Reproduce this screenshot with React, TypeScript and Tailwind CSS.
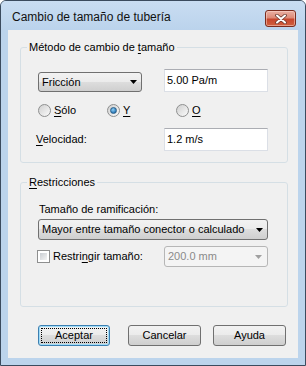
import React from "react";

const face =
  "bg-[linear-gradient(#f2f2f2_0%,#ebebeb_50%,#dddddd_50%,#cfcfcf_100%)]";

function Arrow({ color = "#000" }: { color?: string }) {
  return (
    <svg width="7" height="4" viewBox="0 0 7 4" className="shrink-0">
      <path d="M0 0H7L3.5 4Z" fill={color} />
    </svg>
  );
}

function Radio({ checked, children }: { checked?: boolean; children: React.ReactNode }) {
  return (
    <div className="flex items-center w-[69px] h-[13px]">
      <div className="w-[13px] h-[13px] rounded-full border border-[#8e8f8f] bg-[linear-gradient(135deg,#cfcfcf,#fbfbfb)] flex items-center justify-center shrink-0">
        {checked && (
          <div className="w-[7px] h-[7px] rounded-full border border-[#2c5f88] bg-[radial-gradient(circle_at_40%_35%,#8fd0f5,#2a78b8_70%,#1b4f7e)]" />
        )}
      </div>
      <span className="ml-[3px] leading-[13px]">{children}</span>
    </div>
  );
}

function TextBox({ value }: { value: string }) {
  return (
    <div className="w-[104px] h-[23px] bg-white border border-[#dbdfe6] border-t-[#abadb3] flex items-center pl-[2px] leading-[13px]">
      {value}
    </div>
  );
}

export default function App() {
  return (
    <div className="w-[306px] h-[366px] flex flex-col bg-[#bcd4ec] border border-[#3b4b5e] rounded-t-[6px] overflow-hidden font-['Liberation_Sans',Arial,sans-serif] text-[11px] text-black">
      {/* Title bar */}
      <div className="h-[29px] shrink-0 flex items-start justify-between pl-[11px] pr-[9px] bg-[linear-gradient(#c9ddf2,#bbd3ec)]">
        <div className="pt-[9px] text-[12px] leading-[15px] text-[#111]">
          Cambio de tamaño de tubería
        </div>
        <div className="mt-[9px] w-[31px] h-[17px] rounded-[3px] border border-[#7a2c1e] bg-[linear-gradient(#eab0a3_0%,#dd8a77_45%,#c7462d_55%,#d0603f_100%)] flex items-center justify-center shadow-[inset_0_0_0_1px_rgba(255,220,210,0.5)]">
          <svg width="12" height="10" viewBox="0 0 12 10">
            <path d="M2 1.5L10 8.5M10 1.5L2 8.5" stroke="#6b3a30" strokeWidth="3.6" strokeLinecap="round" />
            <path d="M2 1.5L10 8.5M10 1.5L2 8.5" stroke="#ffffff" strokeWidth="2" strokeLinecap="round" />
          </svg>
        </div>
      </div>

      {/* Client area */}
      <div className="flex-1 ml-[7px] mb-[7px] w-[290px] bg-[#f0f0f0] flex flex-col">
        {/* Group 1 */}
        <fieldset className="mt-[11px] ml-[12px] w-[268px] border border-[#d5dfe5] rounded-[3px] pl-[17px] pr-[19px] pb-[11px]">
          <legend className="-ml-[11px] px-[2px] leading-[13px]">
            Método de cambio de <span className="underline underline-offset-[2px]">t</span>amaño
          </legend>
          <div className="pt-[15px] flex items-end justify-between">
            <div className={`w-[104px] h-[20px] rounded-[3px] border border-[#707070] ${face} flex items-center justify-between pl-[3px] pr-[4px] leading-[13px]`}>
              <span>Fricción</span>
              <Arrow />
            </div>
            <TextBox value="5.00 Pa/m" />
          </div>
          <div className="mt-[12px] flex items-center">
            <Radio>
              <span className="underline underline-offset-[2px]">S</span>ólo
            </Radio>
            <Radio checked>
              <span className="underline underline-offset-[2px]">Y</span>
            </Radio>
            <Radio>
              <span className="underline underline-offset-[2px]">O</span>
            </Radio>
          </div>
          <div className="mt-[11px] flex items-center justify-between">
            <span className="-ml-[2px] leading-[13px]">
              <span className="underline underline-offset-[2px]">V</span>elocidad:
            </span>
            <TextBox value="1.2 m/s" />
          </div>
        </fieldset>

        {/* Group 2 */}
        <fieldset className="mt-[13px] ml-[12px] w-[268px] border border-[#d5dfe5] rounded-[3px] pl-[17px] pr-[19px] pb-[39px]">
          <legend className="-ml-[11px] px-[2px] leading-[13px]">
            <span className="underline underline-offset-[2px]">R</span>estricciones
          </legend>
          <div className="pt-[14px] pl-[1px] leading-[13px]">Tamaño de ramificación:</div>
          <div className={`mt-[3px] w-[230px] h-[21px] rounded-[3px] border border-[#707070] ${face} flex items-center justify-between pl-[3px] pr-[4px] leading-[13px]`}>
            <span>Mayor entre tamaño conector o calculado</span>
            <Arrow />
          </div>
          <div className="mt-[6px] flex items-center justify-between">
            <div className="flex items-center -ml-[1px]">
              <div className="w-[13px] h-[13px] border border-[#8e8f8f] bg-white p-[2px]">
                <div className="w-full h-full bg-[linear-gradient(135deg,#c9cdd2,#f4f4f4)]" />
              </div>
              <span className="ml-[3px] leading-[13px]">
                Restri<span className="underline underline-offset-[2px]">n</span>gir tamaño:
              </span>
            </div>
            <div className="w-[104px] h-[21px] rounded-[3px] border border-[#b6b6b6] bg-[#f4f4f4] flex items-center justify-between pl-[3px] pr-[5px] leading-[13px] text-[#8a8a8a]">
              <span>200.0 mm</span>
              <Arrow color="#a0a0a0" />
            </div>
          </div>
        </fieldset>

        {/* Buttons */}
        <div className="mt-[18px] ml-[30px] flex items-center">
          <div className={`w-[72px] h-[21px] rounded-[3px] border border-[#3c7fb1] ${face} shadow-[inset_0_0_0_1px_#9fdcf8] p-[2px] flex`}>
            <div className="flex-1 border border-dotted border-black flex items-center justify-center leading-[13px]">
              Aceptar
            </div>
          </div>
          <div className={`ml-[18px] w-[73px] h-[21px] rounded-[3px] border border-[#707070] ${face} flex items-center justify-center leading-[13px]`}>
            Cancelar
          </div>
          <div className={`ml-[12px] w-[73px] h-[21px] rounded-[3px] border border-[#707070] ${face} flex items-center justify-center leading-[13px]`}>
            Ayuda
          </div>
        </div>
      </div>
    </div>
  );
}
